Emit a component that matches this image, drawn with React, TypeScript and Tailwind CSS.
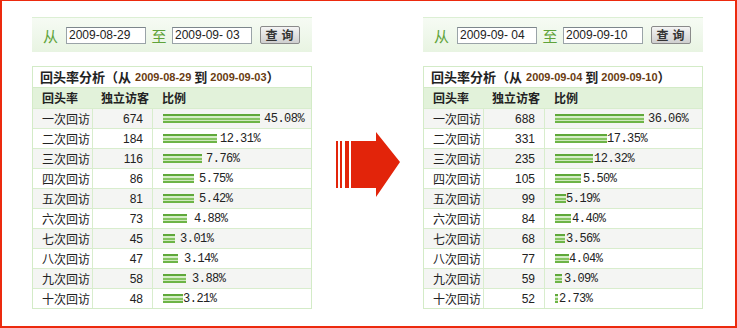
import React from "react";

type Row = { label: string; count: number; pct: string; bar: number; textAt: number };

const labels = ["一次回访", "二次回访", "三次回访", "四次回访", "五次回访", "六次回访", "七次回访", "八次回访", "九次回访", "十次回访"];

const leftRows: Row[] = [
  [674, "45.08%", 97, 101],
  [184, "12.31%", 54, 57],
  [116, "7.76%", 39, 43],
  [86, "5.75%", 31, 36],
  [81, "5.42%", 31, 36],
  [73, "4.88%", 24, 31],
  [45, "3.01%", 12, 17],
  [47, "3.14%", 15, 21],
  [58, "3.88%", 23, 29],
  [48, "3.21%", 20, 20],
].map(([count, pct, bar, textAt], i) => ({ label: labels[i], count, pct, bar, textAt } as Row));

const rightRows: Row[] = [
  [688, "36.06%", 89, 93],
  [331, "17.35%", 52, 52],
  [235, "12.32%", 38, 39],
  [105, "5.50%", 26, 28],
  [99, "5.19%", 11, 11],
  [84, "4.40%", 16, 17],
  [68, "3.56%", 10, 11],
  [77, "4.04%", 14, 14],
  [59, "3.09%", 7, 9],
  [52, "2.73%", 3, 4],
].map(([count, pct, bar, textAt], i) => ({ label: labels[i], count, pct, bar, textAt } as Row));

const cjk = "font-['Noto_Sans_CJK_SC','Noto_Sans',sans-serif]";

function SearchBar({ from, to }: { from: string; to: string }) {
  return (
    <div className="flex h-[35px] items-center border-t border-[#dcefd4] bg-gradient-to-b from-[#f6fbf4] to-[#e8f4e2] pl-[11px]">
      <span className={`${cjk} w-[23px] text-[15px] leading-none text-[#5fa33a]`}>从</span>
      <div className="flex h-[17px] w-[80px] items-center border border-[#9aa3a8] border-t-[#7d868c] bg-white pl-[2px] font-['Liberation_Sans',sans-serif] text-[12px] text-[#222]">
        {from}
      </div>
      <span className={`${cjk} w-[26px] text-center text-[15px] leading-none text-[#5fa33a]`}>至</span>
      <div className="flex h-[17px] w-[80px] items-center border border-[#9aa3a8] border-t-[#7d868c] bg-white pl-[2px] font-['Liberation_Sans',sans-serif] text-[12px] text-[#222]">
        {to}
      </div>
      <div className={`${cjk} ml-[8px] flex h-[18px] w-[40px] items-center justify-center rounded-[2px] border border-[#8a8a8a] bg-gradient-to-b from-[#f4f4f4] to-[#cfcfcf] pl-[3px] text-[12px] font-bold leading-none tracking-[4px] text-[#333]`}>
        查询
      </div>
    </div>
  );
}

function StatTable({ from, to, rows, cols }: { from: string; to: string; rows: Row[]; cols: string }) {
  return (
    <div className="mt-[14px] border border-[#d3ebc7] bg-white">
      <div className={`${cjk} flex h-[20px] items-center overflow-hidden whitespace-nowrap pl-[7px] text-[13px] font-bold text-[#222]`}>
        回头率分析（从
        <span className="ml-[4px] font-['Liberation_Sans',sans-serif] text-[11px] font-bold text-[#6a3c12]">{from}</span>
        <span className="mx-[3px]">到</span>
        <span className="font-['Liberation_Sans',sans-serif] text-[11px] font-bold text-[#6a3c12]">{to}</span>
        ）
      </div>
      <div className={`grid ${cols} h-[21px] items-center border-t border-[#d3ebc7] bg-[#e2f2da] ${cjk} text-[12px] font-bold text-[#222]`}>
        <div className="pl-[9px]">回头率</div>
        <div className="pl-[8px]">独立访客</div>
        <div className="pl-[9px]">比例</div>
      </div>
      {rows.map((r, i) => (
        <div
          key={r.label}
          className={`grid ${cols} h-[20px] border-t border-[#d8edcd] ${i % 2 === 0 ? "bg-[#f4f5f3]" : "bg-white"}`}
        >
          <div className={`${cjk} flex items-center border-r border-[#d8edcd] pl-[9px] text-[12px] text-[#222]`}>{r.label}</div>
          <div className="flex items-center justify-end border-r border-[#d8edcd] pr-[9px] font-['Liberation_Sans',sans-serif] text-[12px] text-[#222]">
            {r.count}
          </div>
          <div className="flex items-center pl-[10px]">
            <div
              className="h-[9px] bg-[linear-gradient(to_bottom,#5fa83a_0,#5fa83a_2px,#d6edc8_2px,#d6edc8_4px,#86c462_4px,#86c462_6px,#cfe9be_6px,#cfe9be_7px,#6db446_7px)]"
              style={{ width: r.bar }}
            />
            <span
              className="font-['Liberation_Mono',monospace] text-[12px] leading-none tracking-[-0.5px] text-[#222]"
              style={{ marginLeft: r.textAt - r.bar }}
            >
              {r.pct}
            </span>
          </div>
        </div>
      ))}
    </div>
  );
}

function Arrow() {
  return (
    <svg width="64" height="66" viewBox="0 0 64 66" className="mt-[115px] ml-[24px]">
      <rect x="0" y="9" width="2" height="47" fill="#e2240a" />
      <rect x="4" y="9" width="2" height="47" fill="#e2240a" />
      <rect x="9" y="9" width="4" height="47" fill="#e2240a" />
      <polygon points="15,9 40,9 40,0 64,30 40,65 40,56 15,56" fill="#e2240a" />
    </svg>
  );
}

export default function App() {
  return (
    <div className="h-[328px] w-[737px] overflow-hidden border-2 border-t border-[#ec2a0e] bg-white">
      <div className="flex pl-[30px] pt-[16px]">
        <div className="w-[280px]">
          <SearchBar from="2009-08-29" to="2009-09- 03" />
          <StatTable from="2009-08-29" to="2009-09-03" rows={leftRows} cols="grid-cols-[60px_60px_1fr]" />
        </div>
        <div className="w-[111px]">
          <Arrow />
        </div>
        <div className="w-[280px]">
          <SearchBar from="2009-09- 04" to="2009-09-10" />
          <StatTable from="2009-09-04" to="2009-09-10" rows={rightRows} cols="grid-cols-[60px_61px_1fr]" />
        </div>
      </div>
    </div>
  );
}
